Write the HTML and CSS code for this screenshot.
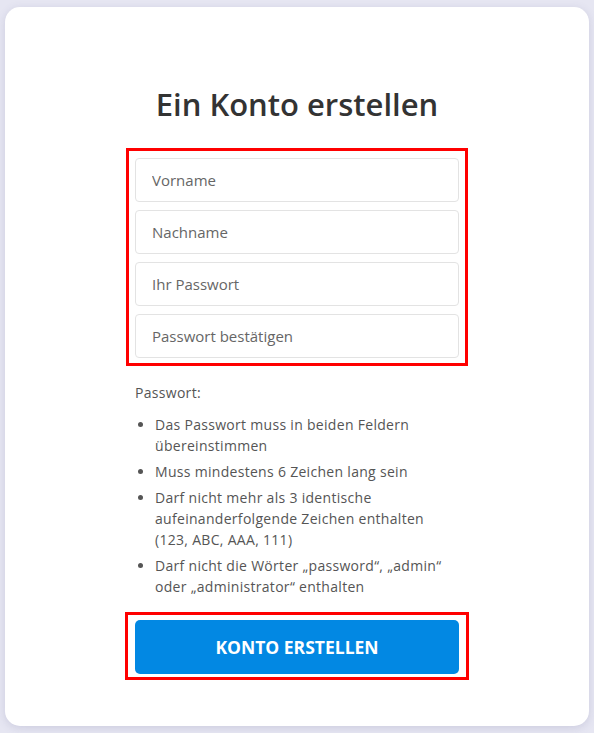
FILE: index.html
```html
<!DOCTYPE html>
<html lang="de">
<head>
    <meta charset="UTF-8">
    <meta name="viewport" content="width=device-width, initial-scale=1.0">
    <title>Ein Konto erstellen</title>
    <link rel="stylesheet" href="styles.css">
</head>
<body>
    <div class="card">
        <h1>Ein Konto erstellen</h1>
        <form id="signupForm">
            <div class="field-box">
                <input type="text" name="firstname" placeholder="Vorname">
                <input type="text" name="lastname" placeholder="Nachname">
                <input type="password" name="password" placeholder="Ihr Passwort">
                <input type="password" name="password2" placeholder="Passwort bestätigen">
            </div>

            <div class="rules">
                <p>Passwort:</p>
                <ul>
                    <li>Das Passwort muss in beiden Feldern übereinstimmen</li>
                    <li>Muss mindestens 6 Zeichen lang sein</li>
                    <li>Darf nicht mehr als 3 identische aufeinanderfolgende Zeichen enthalten (123, ABC, AAA, 111)</li>
                    <li>Darf nicht die Wörter „password“, „admin“ oder „administrator“ enthalten</li>
                </ul>
            </div>

            <div class="button-box">
                <button type="submit">Konto erstellen</button>
            </div>
        </form>
    </div>
</body>
</html>
```

FILE: styles.css
```css
body {
    margin: 0;
    padding: 7px 5px;
    background: #e6e6f2;
    font-family: 'Open Sans', sans-serif;
    color: #444;
}

.card {
    background: #fff;
    border-radius: 15px;
    box-shadow: 0 2px 8px rgba(90, 90, 140, 0.18);
    height: 719px;
    box-sizing: border-box;
    padding-top: 77px;
}

h1 {
    margin: 0 0 24px;
    text-align: center;
    font-size: 31px;
    font-weight: 600;
    color: #333;
    line-height: 40px;
}

form {
    width: 342px;
    margin: 0 auto;
}

.field-box {
    border: 3px solid #ff0000;
    padding: 7px 6px 5px;
    display: flex;
    flex-direction: column;
    gap: 8px;
}

input {
    height: 44px;
    box-sizing: border-box;
    border: 1px solid #e3e3e3;
    border-radius: 4px;
    padding: 0 16px;
    font-family: inherit;
    font-size: 15px;
    color: #333;
}

input::placeholder {
    color: #666;
}

.rules {
    padding: 0 13px 0 9px;
    font-size: 14px;
    letter-spacing: 0.3px;
    color: #555;
    line-height: 21px;
}

.rules p {
    margin: 16px 0 11px;
}

.rules ul {
    margin: 0;
    padding-left: 20px;
}

.rules li {
    margin-bottom: 5px;
}

.button-box {
    border: 3px solid #ff0000;
    margin: 15px -1px 0;
    padding: 5px 7px 3px;
}

button {
    display: block;
    width: 100%;
    height: 54px;
    background: #0288e3;
    color: #fff;
    border: none;
    border-radius: 5px;
    font-family: inherit;
    font-size: 17.5px;
    font-weight: 700;
    text-transform: uppercase;
    cursor: pointer;
}
```
